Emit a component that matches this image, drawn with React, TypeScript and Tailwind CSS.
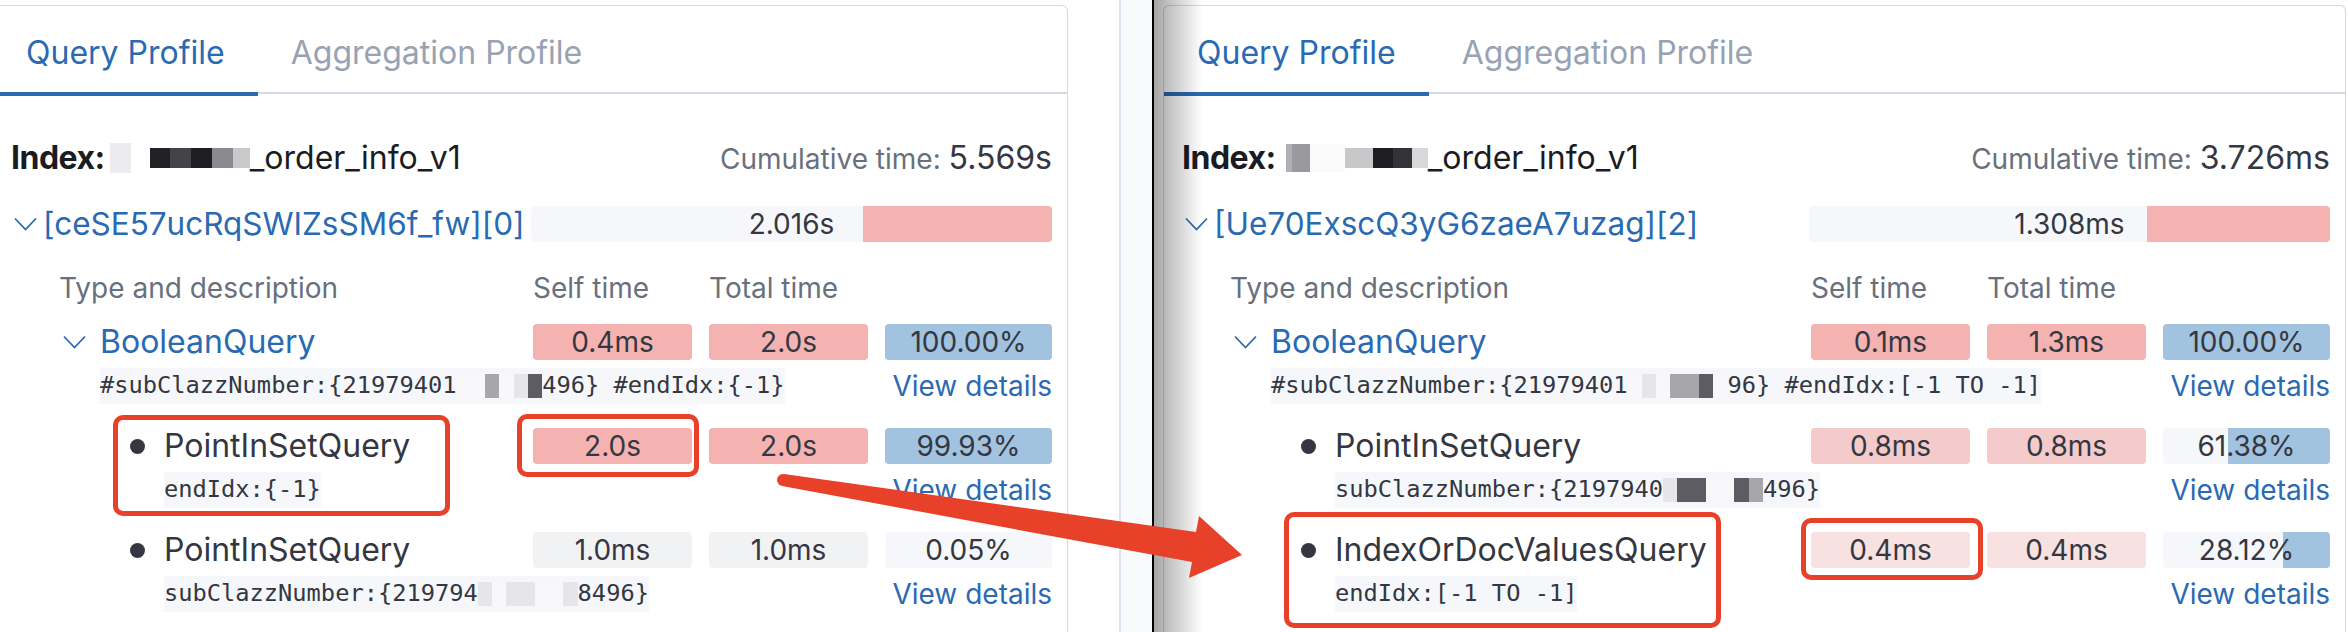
import React from 'react';

type Block = 'w' | 'l' | 'g' | 'm' | 'd' | 'k';
type Seg = string | Block[];

const blockBg: Record<Block, string> = {
  w: 'bg-[#f8f8fa]',
  l: 'bg-[#e6e6ea]',
  g: 'bg-[#a7a7ab]',
  m: 'bg-[#7c7c82]',
  d: 'bg-[#5c5c62]',
  k: 'bg-[#2a2a2e]',
};

type Bar = { text: string; bg: string };
type Row = {
  kind: 'bool' | 'leaf';
  name: string;
  desc: Seg[];
  self: Bar;
  total: Bar;
  pct: { text: string; fill: number };
};

type Panel = {
  width: string;
  indexName: React.ReactNode;
  cumulative: string;
  shard: string;
  shardTime: string;
  shardFill: number;
  rows: Row[];
};

const PINK = 'bg-[#f4b2b0]';

function Chevron() {
  return (
    <svg width="23" height="14" viewBox="0 0 23 14" className="shrink-0">
      <polyline points="1,1.5 11.5,12.5 22,1.5" fill="none" stroke="#2a6ab2" strokeWidth="1.8" />
    </svg>
  );
}

function Desc({ segs }: { segs: Seg[] }) {
  return (
    <span className="inline-flex items-center h-[36px] bg-[#f5f7fa] text-[23.7px] text-[#343741] font-['DejaVu_Sans_Mono',monospace] whitespace-pre">
      {segs.map((s, i) =>
        typeof s === 'string' ? (
          <span key={i}>{s}</span>
        ) : (
          <span key={i} className="inline-flex h-[24px]">
            {s.map((b, j) => (
              <span key={j} className={`inline-block w-[14.27px] h-[24px] ${blockBg[b]}`} />
            ))}
          </span>
        )
      )}
    </span>
  );
}

function TimeBar({ bar, w }: { bar: Bar; w: string }) {
  return (
    <div className={`${w} h-[36px] rounded-[4px] ${bar.bg} flex items-center justify-center text-[28px] text-[#343741]`}>
      {bar.text}
    </div>
  );
}

function PctBar({ text, fill }: { text: string; fill: number }) {
  return (
    <div className="relative w-[167px] h-[36px] rounded-[4px] bg-[#f5f7fa] overflow-hidden flex items-center justify-center text-[28px] text-[#343741]">
      <div className="absolute right-0 top-0 h-full bg-[#a2c3df]" style={{ width: `${fill * 100}%` }} />
      <span className="relative">{text}</span>
    </div>
  );
}

function ProfilePanel({ p, className }: { p: Panel; className: string }) {
  return (
    <div className={`${p.width} h-[640px] shrink-0 bg-white border-t border-r border-[#d3dae6] font-['Inter',sans-serif] ${className}`}>
      {/* tabs */}
      <div className="flex h-[88px] border-b-2 border-[#d3dae6]">
        <div className="px-[33px] pt-[27px] h-[90px] border-b-4 border-[#2a6ab2] text-[32px] leading-[40px] text-[#2a6ab2]">
          Query Profile
        </div>
        <div className="px-[33px] pt-[27px] text-[32px] leading-[40px] text-[#98a2b3]">Aggregation Profile</div>
      </div>

      <div className="pl-[18px] pr-[15px]">
        {/* index */}
        <div className="mt-[44px] h-[40px] flex items-center justify-between">
          <div className="flex items-center text-[32px] text-[#1a1c21]">
            <span className="font-bold tracking-[-0.5px]">Index:</span>
            {p.indexName}
            <span>_order_info_v1</span>
          </div>
          <div className="flex items-baseline">
            <span className="text-[28px] text-[#69707d]">Cumulative time:&nbsp;</span>
            <span className="text-[32px] text-[#343741]">{p.cumulative}</span>
          </div>
        </div>

        {/* shard */}
        <div className="mt-[28px] h-[36px] flex items-center justify-between">
          <div className="flex items-center gap-[6px] pl-[3px] text-[31.5px] text-[#2a6ab2] whitespace-nowrap">
            <Chevron />
            <span>{p.shard}</span>
          </div>
          <div className="relative shrink-0 w-[521px] h-[36px] rounded-[4px] bg-[#f5f7fa] overflow-hidden flex items-center justify-center text-[28px] text-[#343741]">
            <div className={`absolute right-0 top-0 h-full ${PINK}`} style={{ width: `${p.shardFill * 100}%` }} />
            <span className="relative">{p.shardTime}</span>
          </div>
        </div>

        {/* header */}
        <div className="mt-[28px] h-[36px] flex items-center justify-between text-[28px] text-[#69707d]">
          <span className="pl-[48px]">Type and description</span>
          <div className="w-[519px] flex gap-[17px]">
            <span className="w-[159px]">Self time</span>
            <span className="w-[159px]">Total time</span>
            <span className="w-[167px]" />
          </div>
        </div>

        {/* rows */}
        {p.rows.map((r, i) => (
          <div key={i} className={i === 0 ? 'mt-[18px]' : 'mt-[24px]'}>
            <div className="h-[36px] flex items-center justify-between">
              {r.kind === 'bool' ? (
                <div className="pl-[52px] flex items-center gap-[14px] text-[32px] text-[#2a6ab2]">
                  <Chevron />
                  <span>{r.name}</span>
                </div>
              ) : (
                <div className="pl-[119px] flex items-center gap-[19px] text-[32px] text-[#343741]">
                  <span className="w-[15px] h-[15px] rounded-full bg-[#343741]" />
                  <span>{r.name}</span>
                </div>
              )}
              <div className="w-[519px] flex gap-[17px]">
                <TimeBar bar={r.self} w="w-[159px]" />
                <TimeBar bar={r.total} w="w-[159px]" />
                <PctBar text={r.pct.text} fill={r.pct.fill} />
              </div>
            </div>
            <div className="mt-[8px] h-[36px] flex items-center justify-between">
              <div className={r.kind === 'bool' ? 'pl-[89px]' : 'pl-[153px]'}>
                <Desc segs={r.desc} />
              </div>
              <span className="text-[28px] text-[#2a6ab2]">View details</span>
            </div>
          </div>
        ))}
      </div>
    </div>
  );
}

const leftPanel: Panel = {
  width: 'w-[1075px]',
  indexName: (
    <span className="flex items-center ml-[5px]">
      <span className="w-[21px] h-[30px] bg-[#ececee]" />
      <span className="w-[19px]" />
      <span className="w-[20px] h-[20px] bg-[#222226]" />
      <span className="w-[21px] h-[20px] bg-[#444448]" />
      <span className="w-[21px] h-[20px] bg-[#1e1e22]" />
      <span className="w-[21px] h-[20px] bg-[#8a8a8e]" />
      <span className="w-[17px] h-[20px] bg-[#c9c9cc]" />
    </span>
  ),
  cumulative: '5.569s',
  shard: '[ceSE57ucRqSWIZsSM6f_fw][0]',
  shardTime: '2.016s',
  shardFill: 2.016 / 5.569,
  rows: [
    {
      kind: 'bool',
      name: 'BooleanQuery',
      desc: ['#subClazzNumber:{21979401', ['w', 'w', 'g', 'w', 'l', 'd'], '496} #endIdx:{-1}'],
      self: { text: '0.4ms', bg: PINK },
      total: { text: '2.0s', bg: PINK },
      pct: { text: '100.00%', fill: 1 },
    },
    {
      kind: 'leaf',
      name: 'PointInSetQuery',
      desc: ['endIdx:{-1}'],
      self: { text: '2.0s', bg: PINK },
      total: { text: '2.0s', bg: PINK },
      pct: { text: '99.93%', fill: 0.9993 },
    },
    {
      kind: 'leaf',
      name: 'PointInSetQuery',
      desc: ['subClazzNumber:{219794', ['l', 'w', 'l', 'l', 'w', 'w', 'l'], '8496}'],
      self: { text: '1.0ms', bg: 'bg-[#f1f2f4]' },
      total: { text: '1.0ms', bg: 'bg-[#f1f2f4]' },
      pct: { text: '0.05%', fill: 0.0005 },
    },
  ],
};

const rightPanel: Panel = {
  width: 'w-[1183px]',
  indexName: (
    <span className="flex items-center ml-[10px]">
      <span className="w-[6px] h-[28px] bg-[#b0b0b4]" />
      <span className="w-[18px] h-[28px] bg-[#9a9a9e]" />
      <span className="w-[35px] h-[28px] bg-[#fbfbfc]" />
      <span className="w-[28px] h-[20px] bg-[#c8c8cb]" />
      <span className="w-[20px] h-[20px] bg-[#1e1e22]" />
      <span className="w-[19px] h-[20px] bg-[#333337]" />
      <span className="w-[16px] h-[20px] bg-[#d8d8da]" />
    </span>
  ),
  cumulative: '3.726ms',
  shard: '[Ue70ExscQ3yG6zaeA7uzag][2]',
  shardTime: '1.308ms',
  shardFill: 1.308 / 3.726,
  rows: [
    {
      kind: 'bool',
      name: 'BooleanQuery',
      desc: ['#subClazzNumber:{21979401', ['w', 'l', 'w', 'g', 'g', 'd', 'w'], '96} #endIdx:[-1 TO -1]'],
      self: { text: '0.1ms', bg: PINK },
      total: { text: '1.3ms', bg: PINK },
      pct: { text: '100.00%', fill: 1 },
    },
    {
      kind: 'leaf',
      name: 'PointInSetQuery',
      desc: ['subClazzNumber:{2197940', ['l', 'd', 'd', 'w', 'w', 'd', 'g'], '496}'],
      self: { text: '0.8ms', bg: 'bg-[#f5caca]' },
      total: { text: '0.8ms', bg: 'bg-[#f5caca]' },
      pct: { text: '61.38%', fill: 0.6138 },
    },
    {
      kind: 'leaf',
      name: 'IndexOrDocValuesQuery',
      desc: ['endIdx:[-1 TO -1]'],
      self: { text: '0.4ms', bg: 'bg-[#f7e1e1]' },
      total: { text: '0.4ms', bg: 'bg-[#f7e1e1]' },
      pct: { text: '28.12%', fill: 0.2812 },
    },
  ],
};

export default function App() {
  return (
    <div className="relative w-[2348px] h-[632px] overflow-hidden bg-white flex items-start">
      <ProfilePanel p={leftPanel} className="-ml-[7px] mt-[5px] rounded-tr-[6px]" />

      {/* gap between the two screenshots */}
      <div className="w-[51px] h-full shrink-0 bg-white" />
      <div className="w-[2px] h-full shrink-0 bg-[#dfe4ee]" />
      <div className="w-[31px] h-full shrink-0 bg-[#f9fafc]" />

      {/* right screenshot with dark edge */}
      <div className="relative h-full shrink-0 border-l-2 border-black flex items-start">
        <ProfilePanel p={rightPanel} className="ml-[9px] mt-[5px] border-l rounded-t-[6px]" />
        <div className="absolute left-0 top-0 h-full w-[48px] bg-gradient-to-r from-black/35 to-transparent pointer-events-none" />
      </div>

      {/* annotation boxes */}
      <div className="absolute left-[113px] top-[415px] w-[337px] h-[101px] border-[5px] border-[#e8412a] rounded-[10px]" />
      <div className="absolute left-[517px] top-[414px] w-[182px] h-[63px] border-[5px] border-[#e8412a] rounded-[10px]" />
      <div className="absolute left-[1284px] top-[512px] w-[437px] h-[116px] border-[5px] border-[#e8412a] rounded-[10px]" />
      <div className="absolute left-[1801px] top-[518px] w-[182px] h-[62px] border-[5px] border-[#e8412a] rounded-[10px]" />

      {/* arrow */}
      <svg className="absolute left-0 top-0 pointer-events-none" width="2348" height="632">
        <circle cx="783" cy="480" r="6" fill="#e8412a" />
        <polygon
          points="784,474 1196,532 1199,516 1242,555 1189,578 1192,562 782,486"
          fill="#e8412a"
        />
      </svg>
    </div>
  );
}
